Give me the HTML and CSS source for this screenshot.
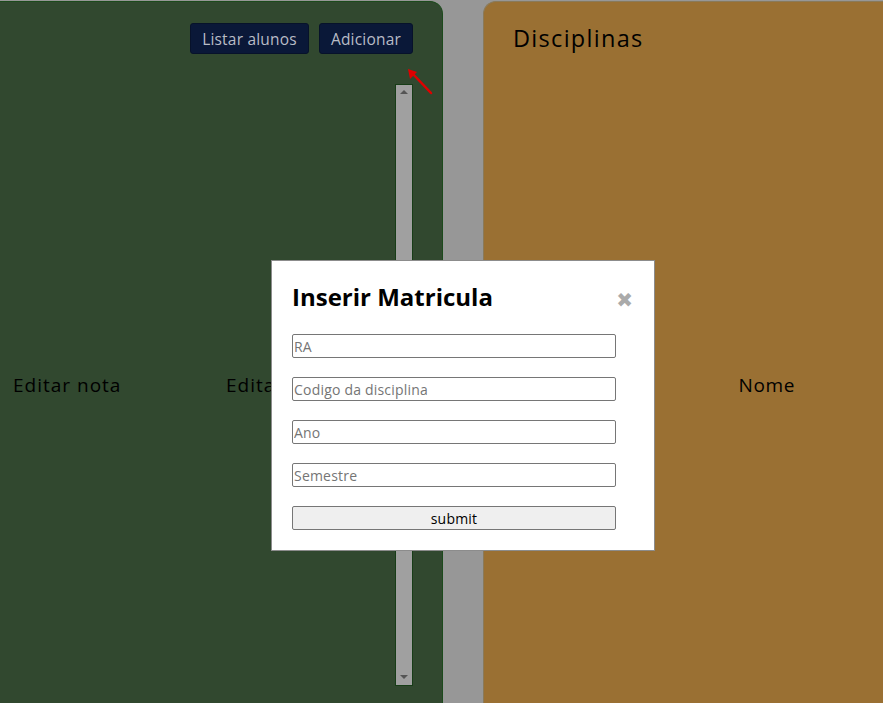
FILE: index.html
```html
<!DOCTYPE html>
<html lang="pt">
<head>
<meta charset="utf-8">
<title>Matricula</title>
<link rel="stylesheet" href="styles.css">
</head>
<body>
<div class="page">
  <section class="panel panel-green">
    <div class="toolbar">
      <button class="nav-btn">Listar alunos</button>
      <button class="nav-btn">Adicionar</button>
    </div>
    <div class="green-body">
      <div class="cols">
        <span class="col-label">Editar nota</span>
        <span class="col-label">Editar</span>
      </div>
      <div class="scroll">
        <span class="arrow-up"></span>
        <span class="arrow-down"></span>
      </div>
    </div>
  </section>
  <section class="panel panel-orange">
    <h2 class="panel-title">Disciplinas</h2>
    <div class="orange-body">
      <span class="col-label nome">Nome</span>
    </div>
  </section>
</div>

<svg class="pointer" width="30" height="30" viewBox="0 0 30 30">
  <line x1="26" y1="26" x2="7" y2="6" stroke="#e00000" stroke-width="2.5" stroke-linecap="round"/>
  <polygon points="3,2 12,5 5,12" fill="#e00000"/>
</svg>

<div class="modal">
  <div class="modal-head">
    <h1 class="modal-title">Inserir Matricula</h1>
    <span class="close">&#10006;</span>
  </div>
  <form class="modal-form">
    <input type="text" placeholder="RA">
    <input type="text" placeholder="Codigo da disciplina">
    <input type="text" placeholder="Ano">
    <input type="text" placeholder="Semestre">
    <button type="button" class="submit">submit</button>
  </form>
</div>
</body>
</html>
```

FILE: styles.css
```css
html, body {
  margin: 0;
  padding: 0;
  height: 100%;
  overflow: hidden;
}
body {
  background: #979797;
  font-family: "Open Sans", "DejaVu Sans", sans-serif;
}
.page {
  display: flex;
  gap: 40px;
  padding-top: 1px;
  height: 760px;
}
.panel {
  box-sizing: border-box;
  height: 100%;
}
.panel-green {
  width: 443px;
  background: #31482f;
  border: 1px solid #1c4a1c;
  border-left: none;
  border-radius: 0 13px 0 0;
  display: flex;
  flex-direction: column;
}
.toolbar {
  display: flex;
  justify-content: flex-end;
  gap: 10px;
  padding: 21px 29px 0 0;
}
.nav-btn {
  background: #0a1838;
  color: #b9bcc6;
  border: 1px solid #07122a;
  border-radius: 3px;
  font-family: inherit;
  font-size: 15.5px;
  letter-spacing: 0.2px;
  height: 31px;
  padding: 0 11px;
}
.green-body {
  display: flex;
  padding: 0 29px 0 0;
  margin-top: 30px;
  height: 602px;
}
.cols {
  flex: 1;
  display: grid;
  grid-template-columns: 213px auto;
  align-items: center;
  padding-left: 13px;
}
.col-label {
  font-size: 19px;
  letter-spacing: 1px;
  color: #000;
}
.scroll {
  width: 18px;
  box-sizing: border-box;
  background: #a0a0a0;
  border: 1px solid #173d17;
  display: flex;
  flex-direction: column;
  justify-content: space-between;
  align-items: center;
  padding: 5px 0 6px;
}
.arrow-up {
  width: 0;
  height: 0;
  border-left: 4px solid transparent;
  border-right: 4px solid transparent;
  border-bottom: 4px solid #555;
}
.arrow-down {
  width: 0;
  height: 0;
  border-left: 4px solid transparent;
  border-right: 4px solid transparent;
  border-top: 4px solid #555;
}
.panel-orange {
  flex: 1;
  background: #9a7033;
  border: 1px solid #8a7a5a;
  border-right: none;
  border-radius: 13px 0 0 0;
  display: flex;
  flex-direction: column;
}
.panel-title {
  margin: 20px 0 0 29px;
  font-size: 23.5px;
  letter-spacing: 1.3px;
  font-weight: 400;
  color: #000;
}
.orange-body {
  display: flex;
  justify-content: flex-end;
  padding-right: 88px;
}
.nome {
  margin-top: 318px;
  letter-spacing: 0.6px;
}
.pointer {
  position: absolute;
  left: 405px;
  top: 67px;
}
.modal {
  position: absolute;
  left: 271px;
  top: 260px;
  width: 384px;
  height: 291px;
  box-sizing: border-box;
  background: #fff;
  border: 1px solid #8c8c8c;
  padding: 0 20px;
}
.modal-head {
  display: flex;
  justify-content: space-between;
  align-items: center;
  margin-top: 19px;
}
.modal-title {
  margin: 0;
  font-size: 24px;
  font-weight: 700;
  color: #000;
}
.close {
  color: #aaa;
  font-size: 20px;
  font-weight: 700;
  margin-top: 5px;
  margin-right: 1px;
}
.modal-form {
  display: flex;
  flex-direction: column;
  gap: 19px;
  margin-top: 21px;
  width: 324px;
}
.modal-form input,
.modal-form .submit {
  box-sizing: border-box;
  height: 24px;
  margin: 0;
  border: 1px solid #767676;
  border-radius: 2px;
  font-family: inherit;
  font-size: 14px;
  letter-spacing: 0.2px;
  padding: 0 1px;
}
.modal-form input::placeholder {
  color: #757575;
}
.modal-form .submit {
  background: #efefef;
  color: #000;
}
```
